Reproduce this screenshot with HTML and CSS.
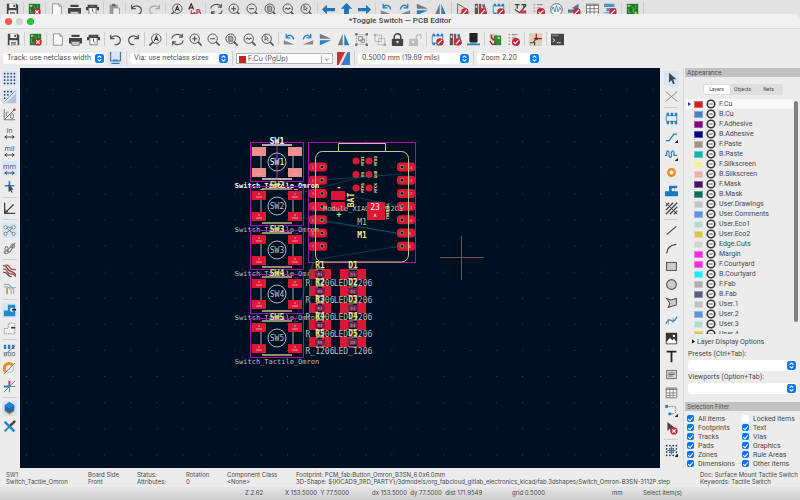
FILE: index.html
```html
<!DOCTYPE html>
<html lang="en">
<head>
<meta charset="utf-8">
<title>Toggle Switch — PCB Editor</title>
<link rel="stylesheet" href="styles.css">
</head>
<body>
<div class="back-toolbar toolbar" data-tools="save | openpcb | page print plot | paste | undo redo:dim | find replace | refresh zoomin zoomout zoomfit zoomobj zoomsel | left up right | rotl rotr mirv mirh | erc lib fpedit | annotate check sim assign table bom | board |"></div>
<main class="window">
  <header class="titlebar">
    <button class="light red" aria-label="Close"></button>
    <button class="light gray" aria-label="Minimize"></button>
    <button class="light green" aria-label="Zoom"></button>
    <h1>*Toggle Switch — PCB Editor</h1>
  </header>
  <div class="toolbar main-toolbar" data-tools="save | openpcb | page print plot | undo redo | find | refresh zoomin zoomout zoomfit zoomobj zoomsel | rotl rotr mirv mirh group ungroup lock unlock:dim | fpedit lib chip | update check | netlist | console"></div>
  <div class="options">
    <span class="pick track"><select aria-label="Track width"><option>Track: use netclass width</option></select><svg class="step" viewBox="0 0 8 8"><use href="#step"/></svg></span>
    <button class="tool on" aria-label="Automatic track width"><svg class="icon"><use href="#trackw"/></svg></button>
    <i class="sep"></i>
    <span class="pick via-size"><select aria-label="Via size"><option>Via: use netclass sizes</option></select><svg class="step" viewBox="0 0 8 8"><use href="#step"/></svg></span>
    <i class="sep"></i>
    <span class="pick layer"><i class="chip-red"></i><select aria-label="Active layer"><option>F.Cu (PgUp)</option></select><svg class="chev" viewBox="0 0 10 10"><path d="M3 4l2 2 2-2"/></svg></span>
    <button class="tool" aria-label="Layer pair"><svg class="icon"><use href="#pair"/></svg></button>
    <i class="sep"></i>
    <span class="pick grid-size"><select aria-label="Grid"><option>0.5000 mm (19.69 mils)</option></select><svg class="step" viewBox="0 0 8 8"><use href="#step"/></svg></span>
    <i class="sep"></i>
    <span class="pick zoom"><select aria-label="Zoom"><option>Zoom 2.20</option></select><svg class="step" viewBox="0 0 8 8"><use href="#step"/></svg></span>
  </div>
  <div class="work">
    <div class="toolbar side left" data-tools="dots:on dotshalf:on polar in mil mm:on cursor | angle | rats:on ratscurve | netcolor netdim | zonefill:on zoneline | padline vialine trackline | layers:on tools"></div>
    <svg class="canvas" id="pcb-canvas" viewBox="20 68 640 400" preserveAspectRatio="xMidYMid slice" role="img" aria-label="Board"></svg>
    <div class="toolbar side right" data-tools="arrow:on cross | footprint route tune via zone hatch | line arc rect circle poly bezier image text textbox tablet dim delete | origin"></div>
    <aside class="panel">
      <h2>Appearance</h2>
      <div class="tabs"><button class="active">Layers</button><button>Objects</button><button>Nets</button></div>
      <div class="layers"><ul id="layer-list"></ul><i class="thumb"></i></div>
      <button class="more"><svg viewBox="0 0 4 6"><path d="M0 0l4 3-4 3z"/></svg>Layer Display Options</button>
      <label for="presets">Presets (Ctrl+Tab):</label>
      <span class="pick wide"><select id="presets"><option></option></select><svg class="step" viewBox="0 0 8 8"><use href="#step"/></svg></span>
      <label for="views">Viewports (Option+Tab):</label>
      <span class="pick wide"><select id="views"><option></option></select><svg class="step" viewBox="0 0 8 8"><use href="#step"/></svg></span>
      <h2 class="filter-title">Selection Filter</h2>
      <div class="filter">
        <label><input type="checkbox" checked>All items</label><label><input type="checkbox">Locked items</label>
        <label><input type="checkbox" checked>Footprints</label><label><input type="checkbox" checked>Text</label>
        <label><input type="checkbox" checked>Tracks</label><label><input type="checkbox" checked>Vias</label>
        <label><input type="checkbox" checked>Pads</label><label><input type="checkbox" checked>Graphics</label>
        <label><input type="checkbox" checked>Zones</label><label><input type="checkbox" checked>Rule Areas</label>
        <label><input type="checkbox" checked>Dimensions</label><label><input type="checkbox" checked>Other items</label>
      </div>
    </aside>
  </div>
  <div class="info">
    <p>SW1<br>Switch_Tactile_Omron</p>
    <p>Board Side<br>Front</p>
    <p>Status:<br>Attributes:</p>
    <p>Rotation<br>0</p>
    <p>Component Class<br>&lt;None&gt;</p>
    <p>Footprint: PCM_fab:Button_Omron_B3SN_6.0x6.0mm<br>3D-Shape: ${KICAD9_3RD_PARTY}/3dmodels/org_fabcloud_gitlab_electronics_kicad/fab.3dshapes/Switch_Omron-B3SN-3112P.step</p>
    <p>Doc: Surface Mount Tactile Switch<br>Keywords: Tactile Switch</p>
  </div>
  <footer class="status"><span></span><span>Z 2.62</span><span>X 153.5000&nbsp; Y 77.5000</span><span>dx 153.5000&nbsp; dy 77.5000&nbsp; dist 171.9549</span><span>grid 0.5000</span><span>mm</span><span>Select item(s)</span></footer>
</main>
<svg class="defs" aria-hidden="true">
  <symbol id="step" viewBox="0 0 8 8"><rect width="8" height="8" rx="2" fill="#0a7aff"/><path d="M2.4 3.2L4 1.7l1.6 1.5M2.4 4.8L4 6.3l1.6-1.5" fill="none" stroke="#fff" stroke-width="1"/></symbol>
  <symbol id="save" viewBox="0 0 16 16"><path d="M1 1h12l2 2v12H1z" fill="#484848"/><path d="M4 1h8v5H4zM3 9h10v6H3z" fill="#f0f0f0"/><path d="M9 2h2v3H9zM5 11h6v1H5zM5 13h6v1H5z" fill="#484848"/></symbol>
  <symbol id="openpcb" viewBox="0 0 16 16"><rect width="14" height="14" x="1" y="1" fill="#187a2c"/><path d="M3 3h3l3 3v3M12 2v4M3 7v5h3" fill="none" stroke="#79bd55"/><circle cx="3.500" cy="3.500" r="1.500" fill="#e5c457"/><circle cx="11" cy="11" r="4.500" fill="#c92736"/><path d="M9 9l4 4m0-4l-4 4" stroke="#fff" stroke-width="1.500"/></symbol>
  <symbol id="board" viewBox="0 0 16 16"><rect width="14" height="14" x="1" y="1" fill="#187a2c"/><path d="M3 3h3l3 3v7M12 2v4l-3 3M3 7v5h3" fill="none" stroke="#79bd55"/><circle cx="3.500" cy="3.500" r="1.500" fill="#e5c457"/><circle cx="12" cy="12" r="1.500" fill="#e5c457"/></symbol>
  <symbol id="page" viewBox="0 0 16 16"><path d="M3 1h8l3 3v11H3z" fill="#f7f7f7" stroke="#888"/><path d="M11 1v3h3" fill="none" stroke="#888"/></symbol>
  <symbol id="print" viewBox="0 0 16 16"><path d="M3 2h10v3H3zM0 6h16v7h-3v-3H3v3H0z" fill="#444"/><path d="M3.500 10.500h9V15h-9z" fill="#f8f8f8" stroke="#444"/><path d="M5 12.500h6" stroke="#888"/></symbol>
  <symbol id="plot" viewBox="0 0 16 16"><path d="M2 2h12v4H2zM0 5h3v4H0zM13 5h3v4h-3z" fill="#444"/><path d="M3.500 6v9M12.500 6v9M3.500 14.500h9M5 4h6" stroke="#777" fill="none"/><path d="M5 7h6v5H5z" fill="#fff"/><path d="M8 7v3l2 2" stroke="#444" fill="none"/></symbol>
  <symbol id="paste" viewBox="0 0 16 16"><path d="M2 2h10v13H2z" fill="#999"/><path d="M5 1h4v3H5z" fill="#666"/><path d="M6 6h8v9H6z" fill="#eee" stroke="#888"/></symbol>
  <symbol id="undo" viewBox="0 0 16 16"><path d="M2 2v5h5M2.500 6.500C5 2 14 3 14 9c0 4-4 6-7 5" fill="none" stroke="#555" stroke-width="1.500"/></symbol>
  <symbol id="redo" viewBox="0 0 16 16"><path d="M14 2v5H9M13.500 6.500C11 2 2 3 2 9c0 4 4 6 7 5" fill="none" stroke="#555" stroke-width="1.500"/></symbol>
  <symbol id="lens" viewBox="0 0 16 16"><circle cx="7" cy="7" r="5.800" fill="none" stroke="#555" stroke-width="1.200"/><path d="M11 11l4.500 4.500" stroke="#555" stroke-width="2"/></symbol>
  <symbol id="find" viewBox="0 0 16 16"><circle cx="9" cy="7" r="5.800" fill="none" stroke="#555" stroke-width="1.200"/><path d="M5 11L.5 15.500" stroke="#555" stroke-width="2"/><path d="M6.500 10L9 4l2.500 6M7.500 8h3" fill="none" stroke="#333" stroke-width="1.400"/></symbol>
  <symbol id="replace" viewBox="0 0 16 16"><path d="M1 8l3-7 3 7M2 6h4" fill="none" stroke="#333" stroke-width="1.500"/><path d="M4 9v4h5m-2-2l2 2-2 2" fill="none" stroke="#c22b3e" stroke-width="1.300"/><path d="M11 8v7h2.500a2 2 0 0 0 0-4H11h2a1.500 1.500 0 0 0 0-3z" fill="none" stroke="#c22b3e" stroke-width="1.300"/></symbol>
  <symbol id="refresh" viewBox="0 0 16 16"><path d="M1 7c1-6 10-7 13-2M15 9c-1 6-10 7-13 2M14 1v4h-4M2 15v-4h4" fill="none" stroke="#555" stroke-width="1.400"/></symbol>
  <symbol id="zoomin" viewBox="0 0 16 16"><use href="#lens"/><path d="M4 7h6M7 4v6" stroke="#444" stroke-width="1.300"/></symbol>
  <symbol id="zoomout" viewBox="0 0 16 16"><use href="#lens"/><path d="M4 7h6" stroke="#444" stroke-width="1.300"/></symbol>
  <symbol id="zoomfit" viewBox="0 0 16 16"><use href="#lens"/><path d="M4.500 4h4l1 1v5h-5z" fill="#aaa" stroke="#555"/></symbol>
  <symbol id="zoomobj" viewBox="0 0 16 16"><use href="#lens"/><path d="M3.500 8l2-2 2 2 2-2 1 1" fill="none" stroke="#555" stroke-width="1.300"/></symbol>
  <symbol id="zoomsel" viewBox="0 0 16 16"><use href="#lens"/><path d="M5 3v6l1.500-1.500L9 10M5 3l4 4H7" fill="none" stroke="#555" stroke-width="1.200"/></symbol>
  <symbol id="left" viewBox="0 0 16 16"><path d="M0 8l6-6v4h10v4H6v4z" fill="#1b74bc"/></symbol>
  <symbol id="right" viewBox="0 0 16 16"><path d="M16 8l-6-6v4H0v4h10v4z" fill="#1b74bc"/></symbol>
  <symbol id="up" viewBox="0 0 16 16"><path d="M8 0l7 7h-4v9H5V7H1z" fill="#1b74bc"/></symbol>
  <symbol id="rotl" viewBox="0 0 16 16"><path d="M1 9l13 5H1z" fill="#888"/><path d="M5 5c2-4 8-2 8 3M4 1v5h5" fill="none" stroke="#2582c8" stroke-width="1.600"/></symbol>
  <symbol id="rotr" viewBox="0 0 16 16"><path d="M15 9L2 14h13z" fill="#888"/><path d="M11 5C9 1 3 3 3 8M12 1v5H7" fill="none" stroke="#2582c8" stroke-width="1.600"/></symbol>
  <symbol id="mirv" viewBox="0 0 16 16"><path d="M1 1l14 6H1z" fill="#777"/><path d="M1 15l14-6H1z" fill="#2582c8"/></symbol>
  <symbol id="mirh" viewBox="0 0 16 16"><path d="M1 15L7 1v14z" fill="#777"/><path d="M15 15L9 1v14z" fill="#2582c8"/></symbol>
  <symbol id="group" viewBox="0 0 16 16"><path d="M2 2h12v12H2z" fill="none" stroke="#999" stroke-dasharray="2 1"/><path d="M4.500 4.500h5v5h-5zM7.500 7.500h4v4h-4z" fill="#eee" stroke="#777"/><path d="M0 0h3v3H0zM13 0h3v3h-3zM0 13h3v3H0zM13 13h3v3h-3z" fill="#777"/></symbol>
  <symbol id="ungroup" viewBox="0 0 16 16"><path d="M2.500 2.500h8v8h-8zM6.500 6.500h8v8h-8z" fill="#eee" stroke="#aaa"/><path d="M1 1h3v3H1zM13 13h3v3h-3z" fill="#aaa"/></symbol>
  <symbol id="lock" viewBox="0 0 16 16"><path d="M4 8V5a4 4 0 0 1 8 0v3" fill="none" stroke="#444" stroke-width="1.800"/><rect x="1" y="7" width="14" height="9" rx="1" fill="#444"/><circle cx="8" cy="11" r="1.500" fill="#ddd"/></symbol>
  <symbol id="unlock" viewBox="0 0 16 16"><path d="M9 8V5a3 3 0 0 1 6 0v2" fill="none" stroke="#777" stroke-width="1.800"/><rect x="0" y="7" width="11" height="9" rx="1" fill="#777"/><circle cx="5" cy="11" r="1.500" fill="#eee"/></symbol>
  <symbol id="no" viewBox="0 0 16 16"><circle cx="11" cy="11" r="4.500" fill="#c92736"/><path d="M8.500 13.500l5-5" stroke="#fff" stroke-width="1.600"/></symbol>
  <symbol id="fpedit" viewBox="0 0 16 16"><path d="M1.500 3.500h13v9h-13z" fill="none" stroke="#2582c8"/><path d="M2 1h3v3H2zM7 1h3v3H7zM12 1h3v3h-3zM2 12h3v3H2zM7 12h3v3H7z" fill="#2582c8"/><use href="#no"/></symbol>
  <symbol id="lib" viewBox="0 0 16 16"><path d="M1 1h4v14H1z" fill="#555"/><path d="M6 1h3v14H6z" fill="#9c4456"/><path d="M10 2l3-1 3 12-3 1z" fill="#557088"/><path d="M2 3h2v3H2z" fill="#ddd"/><use href="#no"/></symbol>
  <symbol id="chip" viewBox="0 0 16 16"><path d="M3 0h10v11H3z" fill="#222"/><path d="M4 11h8v2H4z" fill="#777"/><path d="M0 13h16v2H0z" fill="#2582c8"/></symbol>
  <symbol id="update" viewBox="0 0 16 16"><path d="M1 1h9v9H1z" fill="#d8ceb5"/><path d="M6 3h9v12H6z" fill="#24913b"/><path d="M3 2v4l4 3M1 10l3 4 5-1" fill="none" stroke="#b32331" stroke-width="1.800"/><circle cx="12" cy="6" r="1.500" fill="#e5c457"/></symbol>
  <symbol id="check" viewBox="0 0 16 16"><path d="M2 2h2M6 2h7M2 6h2M6 6h5M2 10h2M2 14h2" stroke="#999" stroke-width="1.500"/><circle cx="11" cy="11" r="5" fill="#c92736"/><path d="M8 11l2 2 4-4" stroke="#fff" stroke-width="1.500" fill="none"/></symbol>
  <symbol id="netlist" viewBox="0 0 16 16"><path d="M0 0h16v16H0z" fill="#ddd0b8"/><path d="M6 7h10M9 1v6" fill="none" stroke="#a32531" stroke-width="1.500"/><path d="M1 12h4l3-4M7 11v4" fill="none" stroke="#444" stroke-width="1.500"/><circle cx="9" cy="7" r="2" fill="#a32531"/></symbol>
  <symbol id="console" viewBox="0 0 16 16"><path d="M0 1h16v14H0z" fill="#444"/><path d="M1 2h8v2H1z" fill="#888"/><path d="M2 7l3 2-3 2M7 12h5" fill="none" stroke="#ddd" stroke-width="1.200"/></symbol>
  <symbol id="erc" viewBox="0 0 16 16"><path d="M2 1l12 7-12 7z" fill="#ddd" stroke="#555"/><use href="#no"/></symbol>
  <symbol id="annotate" viewBox="0 0 16 16"><path d="M1 2h6M4 2v5M9 2h6M12 2v5M1 8l6 4 8-9" stroke="#444" fill="none" stroke-width="1.500"/><path d="M8 9h7v4H8z" fill="#c9404b"/></symbol>
  <symbol id="sim" viewBox="0 0 16 16"><circle cx="8" cy="8" r="7.200" fill="#f7f7f7" stroke="#555"/><path d="M2 9l2-4 2 6 2-8 2 8 2-6 2 4" fill="none" stroke="#2582c8"/></symbol>
  <symbol id="assign" viewBox="0 0 16 16"><path d="M5 6l8-5v9zM0 8h8v4H0z" fill="#56788f"/><use href="#no"/></symbol>
  <symbol id="table" viewBox="0 0 16 16"><path d="M.5 1.500h15v13H.5z" fill="#fff" stroke="#555"/><path d="M1 3h14M1 7h14M1 11h14M5 2v12M10 2v12" stroke="#666"/></symbol>
  <symbol id="bom" viewBox="0 0 16 16"><path d="M0 1h13v4H0zM3 6h12v4H3z" fill="#5891bd"/><path d="M0 12h8" stroke="#777"/><use href="#no"/></symbol>
  <symbol id="trackw" viewBox="0 0 16 16"><path d="M2 0v11h12V0" fill="none" stroke="#555" stroke-width="1.200"/><path d="M5 10h6M3 14h10" stroke="#2582c8" stroke-width="1.800"/></symbol>
  <symbol id="pair" viewBox="0 0 16 16"><path d="M0 0h16v16H0z" fill="#3b7dc0"/><path d="M0 0h11L3 16H0z" fill="#c83434"/><path d="M10 0h3L5 16H2z" fill="#e8e8e8"/></symbol>
  <symbol id="dots" viewBox="0 0 16 16"><path d="M2 2h.1M6 2h.1M10 2h.1M14 2h.1M2 6h.1M6 6h.1M10 6h.1M14 6h.1M2 10h.1M6 10h.1M10 10h.1M14 10h.1M2 14h.1M6 14h.1M10 14h.1M14 14h.1" stroke="#334" stroke-width="2" stroke-linecap="round"/></symbol>
  <symbol id="dotshalf" viewBox="0 0 16 16"><path d="M16 4v12H4z" fill="#b6c4d2"/><path d="M2 2h.1M6 2h.1M10 2h.1M2 6h.1M6 6h.1M2 10h.1" stroke="#334" stroke-width="2" stroke-linecap="round"/><path d="M1 15L15 1" stroke="#888"/></symbol>
  <symbol id="polar" viewBox="0 0 16 16"><path d="M1.500 1v13.500H15M2 14L14 2M4 5v5M5 5h2" fill="none" stroke="#666"/><ellipse cx="11" cy="10" rx="2" ry="3" fill="none" stroke="#666"/><circle cx="14" cy="2" r="1.500" fill="#c92736"/></symbol>
  <symbol id="unitline" viewBox="0 0 14 5"><path d="M2 2.500h10M4 .5l-3 2 3 2M10 .5l3 2-3 2" fill="none" stroke="#444" stroke-width="1.200"/></symbol>
  <symbol id="cursor" viewBox="0 0 16 16"><path d="M8 1v12M2 7h12" stroke="#2582c8" stroke-width="2"/><path d="M7 5v10l2-2 2 3 1-1-2-3h3z" fill="#444"/></symbol>
  <symbol id="angle" viewBox="0 0 16 16"><path d="M2 1v13h13M2 14L13 3" fill="none" stroke="#444" stroke-width="1.600"/><path d="M3 9v4h4z" fill="#444"/></symbol>
  <symbol id="rats" viewBox="0 0 16 16"><path d="M3 4l10 8M3 12l10-8M3 4h10" stroke="#666"/><g fill="#f3f7fb" stroke="#777"><circle cx="3" cy="4" r="2"/><circle cx="13" cy="4" r="2"/><circle cx="3" cy="12" r="2"/><circle cx="13" cy="12" r="2"/></g></symbol>
  <symbol id="ratscurve" viewBox="0 0 16 16"><path d="M2 9C4 3 7 6 6 10s3 5 7-6M1 14L15 1" fill="none" stroke="#777" stroke-width="1.300"/><circle cx="4" cy="12" r="2.500" fill="none" stroke="#777"/><circle cx="12" cy="5" r="2.500" fill="none" stroke="#777"/></symbol>
  <symbol id="netcolor" viewBox="0 0 16 16"><path d="M0 2q4 0 5 3t5 4 6 5M0 10q4 0 6 3t5 3" fill="none" stroke="#555" stroke-width="1.600"/><path d="M3 1q4 0 5 3t8 3M0 6q4 0 5 3t5 3 6 4" fill="none" stroke="#cf4a3d" stroke-width="1.600"/></symbol>
  <symbol id="netdim" viewBox="0 0 16 16"><path d="M1 3h6l6 6v6M1 6h5l4 4v5" fill="none" stroke="#aaa" stroke-width="1.400"/><path d="M5 7v8" stroke="#dd806b" stroke-width="2"/><path d="M7 7h9" stroke="#6aa8d8"/></symbol>
  <symbol id="zonefill" viewBox="0 0 16 16"><path d="M1 8h5V1h9v14H1z" fill="#278bd3"/><circle cx="11" cy="7" r="2.500" fill="#eee"/><path d="M11 7h5" stroke="#223" stroke-width="2"/></symbol>
  <symbol id="zoneline" viewBox="0 0 16 16"><path d="M1.500 8h5V1.500h8v13h-13z" fill="#f2f2f2" stroke="#888" stroke-dasharray="2 1"/><path d="M10 7h5" stroke="#333" stroke-width="2"/></symbol>
  <symbol id="padline" viewBox="0 0 16 16"><path d="M1 1h3v5H1zM6 1h3v5H6zM11 1h3v5h-3z" fill="#2582c8"/><path d="M1.500 10.500h3v4h-3zM6.500 10.500h3v4h-3zM11.500 10.500h3v4h-3zM1 14L15 2" fill="none" stroke="#678"/></symbol>
  <symbol id="vialine" viewBox="0 0 16 16"><circle cx="8" cy="8" r="5" fill="none" stroke="#bbb"/><path d="M3 12A6 6 0 0 1 12 4" fill="none" stroke="#ee9020" stroke-width="4"/><path d="M1 15L15 1" stroke="#777"/></symbol>
  <symbol id="trackline" viewBox="0 0 16 16"><path d="M8 1v7" stroke="#c43b47" stroke-width="2.500"/><path d="M1 8h7" stroke="#2582c8" stroke-width="2.500"/><path d="M8 8v7" stroke="#c43b47"/><path d="M8 8h7" stroke="#2582c8"/><path d="M1 15L15 1" stroke="#777"/></symbol>
  <symbol id="layers" viewBox="0 0 16 16"><path d="M2 9v3l6 4 6-4V9z" fill="#e7a13a"/><path d="M8 0l6 4v6l-6 4-6-4V4z" fill="#196cb1"/><path d="M8 0l6 4-6 4-6-4z" fill="#2582c8"/></symbol>
  <symbol id="tools" viewBox="0 0 16 16"><path d="M2 2l12 12" stroke="#2582c8" stroke-width="3"/><path d="M14 2L2 14" stroke="#2582c8" stroke-width="2.500"/><path d="M15 1L9 7" stroke="#444" stroke-width="3"/></symbol>
  <symbol id="arrow" viewBox="0 0 16 16"><path d="M5 1v12l3-3 2 5 2-1-2-5h4z" fill="#444"/></symbol>
  <symbol id="cross" viewBox="0 0 16 16"><path d="M1 2l14 12M15 2L1 14" stroke="#888" stroke-width="1.200"/></symbol>
  <symbol id="footprint" viewBox="0 0 16 16"><path d="M1.500 4.500h13v7h-13z" fill="#e2edf5" stroke="#2582c8"/><path d="M2 1h3v4H2zM7 1h3v4H7zM12 1h3v4h-3zM2 11h3v4H2zM7 11h3v4H7zM12 11h3v4h-3z" fill="#2582c8"/></symbol>
  <symbol id="route" viewBox="0 0 16 16"><path d="M1 13h4l6-8h4" fill="none" stroke="#2582c8" stroke-width="1.600"/><path d="M16 12v4h-4z" fill="#222"/></symbol>
  <symbol id="tune" viewBox="0 0 16 16"><path d="M0 9h2V5q1.500-3 3 0v5q1.500 3 3 0V5q1.500-3 3 0v4h4" fill="none" stroke="#2582c8" stroke-width="1.400"/><path d="M16 12v4h-4z" fill="#222"/></symbol>
  <symbol id="via" viewBox="0 0 16 16"><circle cx="8" cy="8" r="4" fill="#fff" stroke="#ee8b1b" stroke-width="3"/></symbol>
  <symbol id="zone" viewBox="0 0 16 16"><path d="M0 9h5V2h10v3h-3v4h4v6H0z" fill="#1b79bf"/><circle cx="10" cy="7" r="2" fill="#eee"/></symbol>
  <symbol id="hatch" viewBox="0 0 16 16"><path d="M1 5l4-4M1 10l9-9M1 15L15 1M6 15l9-9M11 15l4-4" stroke="#444" stroke-width="1.600"/><path d="M1 1l14 14" stroke="#444"/></symbol>
  <symbol id="line" viewBox="0 0 16 16"><path d="M2 13L14 3" stroke="#444" stroke-width="1.400"/></symbol>
  <symbol id="arc" viewBox="0 0 16 16"><path d="M2 14Q3 4 14 3" fill="none" stroke="#444" stroke-width="1.400"/></symbol>
  <symbol id="rect" viewBox="0 0 16 16"><path d="M2 3h12v10H2z" fill="#ccc" stroke="#555" stroke-width="1.300"/></symbol>
  <symbol id="circle" viewBox="0 0 16 16"><circle cx="8" cy="8" r="6" fill="#ccc" stroke="#555" stroke-width="1.300"/></symbol>
  <symbol id="poly" viewBox="0 0 16 16"><path d="M2 3l5 2 7-2v8l-10 3 2-5z" fill="#ccc" stroke="#555" stroke-width="1.300"/></symbol>
  <symbol id="bezier" viewBox="0 0 16 16"><path d="M1 12Q5 5 8 8t7-5" fill="none" stroke="#2582c8" stroke-width="1.500"/><path d="M4 6v7M10 5v6" stroke="#888"/></symbol>
  <symbol id="image" viewBox="0 0 16 16"><rect x="1" y="1" width="14" height="14" rx="1" fill="#333"/><path d="M2 12l4-5 3 3 2-2 3 4v2H2z" fill="#fff"/><circle cx="11" cy="5" r="1.500" fill="#fff"/></symbol>
  <symbol id="text" viewBox="0 0 16 16"><path d="M2 2h12M8 2v13" fill="none" stroke="#222" stroke-width="2.200"/></symbol>
  <symbol id="textbox" viewBox="0 0 16 16"><path d="M2 3h12v10H2z" fill="#ddd" stroke="#555"/><path d="M4 6h8M4 8h8M4 10h6" stroke="#555"/></symbol>
  <symbol id="tablet" viewBox="0 0 16 16"><path d="M1.500 2.500h13v12h-13z" fill="#fff" stroke="#666"/><path d="M1 3h14v2H1z" fill="#888"/><path d="M2 8.500h12M2 11.500h12M6 3v11M10 3v11" stroke="#777"/></symbol>
  <symbol id="dim" viewBox="0 0 16 16"><path d="M2 3h11v8M6 12h6" fill="none" stroke="#777" stroke-dasharray="2 1"/><circle cx="2" cy="3" r="2" fill="#2582c8"/><circle cx="6" cy="12" r="2" fill="#2582c8"/><path d="M16 12v4h-4z" fill="#222"/></symbol>
  <symbol id="delete" viewBox="0 0 16 16"><path d="M3 0v11l3-3 2 4 2-1-2-4h4z" fill="#444"/><circle cx="11" cy="11" r="4.500" fill="#c92736"/><path d="M9 9l4 4m0-4l-4 4" stroke="#fff" stroke-width="1.500"/></symbol>
  <symbol id="origin" viewBox="0 0 16 16"><use href="#dots"/><path d="M8 3v10M3 8h10" stroke="#2582c8" stroke-width="1.500"/><path d="M16 12v4h-4z" fill="#222"/></symbol>
  <symbol id="eye" viewBox="0 0 10 10"><circle cx="5" cy="5" r="3.800" fill="#fafafa" stroke="#333" stroke-width="1.600"/><path d="M2.500 5h5" stroke="#777" stroke-width=".8"/><circle cx="5" cy="5" r="1" fill="#999"/></symbol>
</svg>
<script src="app.js"></script>
</body>
</html>
```
FILE: styles.css
```css
* { box-sizing: border-box; }
html, body { height: 100%; }
body {
  margin: 0;
  display: flex;
  flex-direction: column;
  overflow: hidden;
  background: #e2e2e2;
  color: #4a4a4a;
  font: 7px/10px Inter, "Liberation Sans", sans-serif;
}
button, select, input { font: inherit; color: inherit; margin: 0; padding: 0; border: 0; background: none; }
h1, h2, p, ul { margin: 0; padding: 0; font: inherit; }
.defs { position: absolute; width: 0; height: 0; }

.toolbar { display: flex; align-items: center; gap: 3px; }
.tool { flex: none; display: grid; place-items: center; width: 15px; height: 15px; border-radius: 2px; }
.tool.on { background: #d5e6fa; }
.tool.dim { opacity: .4; }
.icon { display: block; width: 13px; height: 13px; }
.unit { align-content: center; font: 7px/8px "Open Sans", sans-serif; }
.unit svg { width: 13px; height: 4px; }
.sep { flex: none; width: 1px; height: 14px; background: #d0d0d0; }
.back-toolbar { flex: none; height: 14px; padding: 2px 5px 0; align-items: flex-start; overflow: hidden; }

.window {
  flex: 1;
  min-height: 0;
  display: flex;
  flex-direction: column;
  background: #ececec;
  border-radius: 6px 6px 0 0;
  overflow: hidden;
}
.titlebar { flex: none; display: flex; align-items: center; gap: 4px; height: 15px; padding: 0 5px; background: #f2f1f2; border-bottom: 1px solid #dcdcdc; }
.titlebar h1 { flex: 1; margin-right: 33px; text-align: center; font: 500 8px/10px Roboto, sans-serif; color: #444; }
.light { width: 7px; height: 7px; border-radius: 50%; }
.light.red { background: #fb5650; }
.light.gray { background: #d3d2d4; }
.light.green { background: #27c138; }
.main-toolbar { flex: none; height: 20px; padding: 0 6px; }

.options { flex: none; display: flex; align-items: center; gap: 3px; height: 19px; padding: 0 3px 1px; }
.pick { display: grid; align-items: center; height: 11px; background: #fff; border-radius: 3px; }
.pick select { grid-area: 1 / 1; width: 100%; height: 11px; padding-left: 4px; appearance: none; outline: 0; }
.step { grid-area: 1 / 1; justify-self: end; width: 9px; height: 9px; margin-right: 1px; pointer-events: none; }
.track { width: 102px; }
.via-size { width: 99px; }
.layer { width: 97px; border: 1px solid #b5b5b5; border-radius: 0; }
.layer select { padding-left: 11px; }
.chip-red { grid-area: 1 / 1; width: 7px; height: 7px; margin-left: 2px; background: #c92020; }
.chev { grid-area: 1 / 1; justify-self: end; width: 11px; height: 9px; border-left: 1px solid #b5b5b5; fill: none; stroke: #555; pointer-events: none; }
.grid-size { width: 112px; }
.zoom { width: 63px; }

.work { flex: 1; min-height: 0; display: flex; }
.side { flex: none; flex-direction: column; padding-top: 3px; overflow: hidden; }
.side .sep { width: 14px; height: 1px; }
.left { width: 20px; padding-right: 1px; }
.right { width: 23px; padding-right: 1px; }
.canvas { flex: 1; min-width: 0; display: block; height: 100%; background: #001023; }

.panel { flex: none; width: 117px; display: flex; flex-direction: column; padding-left: 1px; border-left: 1px solid #dadada; font-family: Roboto, sans-serif; }
.panel h2 { flex: none; height: 9px; padding-left: 2px; font: 6px/9px Inter, sans-serif; background: #c2c2c2; }
.tabs { flex: none; align-self: center; display: flex; margin: 7px 0 4px; padding: 1px; border-radius: 3px; background: #dedede; font-size: 5px; line-height: 9px; }
.tabs button { width: 26px; border-radius: 2px; }
.tabs .active { background: #fff; }
.layers { flex: 1; min-height: 0; display: flex; gap: 1px; margin: 0 2px 0 1px; overflow: hidden; }
.layers ul { flex: 1; list-style: none; }
.layers li { display: flex; align-items: center; gap: 3px; height: 10px; padding-left: 2px; }
.layers li::before { content: ""; width: 3px; }
.layers li:first-child { background: #fafafa; }
.layers li:first-child::before { border: solid transparent; border-width: 2px 0 2px 3px; border-left-color: #1536e8; width: 0; }
.swatch { width: 9px; height: 7px; border: 1px solid #ffffff55; }
.eye { width: 10px; height: 10px; }
.thumb { flex: none; width: 4px; height: 94%; margin-top: 2px; border-radius: 2px; background: #7f7f7f; }
.more { flex: none; display: flex; align-items: center; gap: 2px; height: 15px; padding-left: 7px; }
.more svg { width: 3px; height: 5px; fill: #222; }
.panel > label { flex: none; height: 11px; padding-left: 3px; }
.wide { flex: none; margin: 0 3px 1px 3px; }
.panel .filter-title { margin-top: 7px; }
.filter { flex: none; display: grid; grid-template-columns: 55px 1fr; padding: 3px 0 0 2px; }
.filter label { display: flex; align-items: center; gap: 4px; height: 9px; white-space: nowrap; }
.filter input { appearance: none; display: grid; width: 7px; height: 7px; border-radius: 2px; background: #fff; }
.filter input:checked { background: #0a72f5; }
.filter input:checked::after { content: ""; place-self: center; width: 2px; height: 4px; border: solid #fff; border-width: 0 1px 1px 0; rotate: 40deg; }

.info { flex: none; display: grid; grid-template-columns: 82px 49px 49px 41px 69px 404px 1fr; height: 19px; padding: 3px 0 0 6px; font-size: 6px; line-height: 7px; white-space: nowrap; overflow: hidden; }
.status { flex: none; display: grid; grid-template-columns: 245px 40px 87px 140px 100px 31px 1fr; height: 13px; font-size: 6px; line-height: 11px; white-space: nowrap; background: linear-gradient(#e6e6e6, #cecece); }

.mono { font: 7px "DejaVu Sans Mono", monospace; text-anchor: middle; fill: #bdbdbd; }
.ref { font-size: 8px; }
.bold { font-weight: bold; }
.silk { fill: #eee48a; }
.white { fill: #fff; }
.tiny { font-size: 4px; }
.mid { font-size: 6px; }
.pad-label { fill: #ff9aa4; }
```
FILE: app.js
```js
const units = ['in', 'mil', 'mm'];
document.querySelectorAll('[data-tools]').forEach(bar => {
  bar.innerHTML = bar.dataset.tools.split(' ').map(t => {
    if (t === '|') return '<i class="sep"></i>';
    const [id, state = ''] = t.split(':');
    if (units.includes(id)) return `<button class="tool unit ${state}">${id}<svg><use href="#unitline"/></svg></button>`;
    return `<button class="tool ${state}" aria-label="${id}"><svg class="icon"><use href="#${id}"/></svg></button>`;
  }).join('');
});

const layers = [
  ['F.Cu', '#d01f1f'], ['B.Cu', '#4d7fc4'], ['F.Adhesive', '#840084'], ['B.Adhesive', '#000084'],
  ['F.Paste', '#a49488'], ['B.Paste', '#10b4ac'], ['F.Silkscreen', '#f2eda1'], ['B.Silkscreen', '#e8b2a7'],
  ['F.Mask', '#4b1363'], ['B.Mask', '#106b5c'], ['User.Drawings', '#c2c2c2'], ['User.Comments', '#5994dc'],
  ['User.Eco1', '#b4dbd2'], ['User.Eco2', '#d8c852'], ['Edge.Cuts', '#d0d2cd'], ['Margin', '#ff26e2'],
  ['F.Courtyard', '#ff26e2'], ['B.Courtyard', '#26e9ff'], ['F.Fab', '#afafaf'], ['B.Fab', '#585d84'],
  ['User.1', '#c2c2c2'], ['User.2', '#5994dc'], ['User.3', '#b4dbd2'], ['User.4', '#d8c852']
];
document.getElementById('layer-list').innerHTML = layers.map(([name, color]) =>
  `<li><i class="swatch" style="background:${color}"></i><svg class="eye"><use href="#eye"/></svg>${name}</li>`).join('');

const text = (x, y, s, cls = '', turn = 0) =>
  `<text class="mono ${cls}" x="${x}" y="${y}"${turn ? ` transform="rotate(${turn} ${x} ${y})"` : ''}>${s}</text>`;
const box = (x, y, w, h, fill, more = '') => `<rect x="${x}" y="${y}" width="${w}" height="${h}" fill="${fill}" ${more}/>`;
const red = '#dc1735';
const outline = color => `stroke="${color}" stroke-width="1"`;

function button(n) {
  const y = 162 + (n - 1) * 44;
  const hot = n === 1;
  const pad = hot ? '#ef8d8d' : red;
  const line = hot ? '#e4e4e4' : '#bdb887';
  let s = box(250.5, y - 19.5, 53, 39, 'none', outline('#a411a4'));
  s += `<path d="M261 ${y - 15}v30M293 ${y - 15}v30" ${outline('#a9a9a9')}/>`;
  s += `<path d="M262 ${y - 17}h30M262 ${y + 17}h30" stroke="${line}" stroke-width="1.300"/>`;
  for (const px of [252, 288]) for (const py of [y - 15, y + 6]) {
    s += box(px, py, 14, 9, pad) + `<path d="M${px + 4} ${py + 6}h6M${px + 7} ${py + 2}v2" stroke="#ff9aa4"/>`;
  }
  s += `<circle cx="277" cy="${y}" r="9" fill="none" ${outline('#b8b8b8')}/>`;
  s += text(277, y + 3, 'SW' + n, hot ? 'ref white' : 'ref');
  if (hot) s += `<path d="M277 ${y - 18}v36" stroke="#d957d9" stroke-width=".7"/>`;
  s += text(277, hot ? 144 : y - 18, 'SW' + n, 'ref bold ' + (hot ? 'white' : 'silk'));
  s += text(277, y + 26, 'Switch_Tactile_Omron', hot ? 'white bold' : '');
  return s;
}

function part(x, ref, n, label) {
  const y = 274 + (n - 1) * 17;
  const half = ref === 'R' ? 11 : 13;
  return box(x - half, y - 5, 9, 10, red) + box(x + half - 9, y - 5, 9, 10, red) +
    box(x - 5, y - 3, 10, 6, '#712350') +
    `<path d="M${x - 4} ${y - 5}h8M${x - 4} ${y + 5}h8" ${outline('#c7bd7a')}/>` +
    text(x, y + 2, ref + n, 'tiny') +
    text(x, y - 6, ref + n, 'ref bold silk') +
    text(x, y + 12, label, 'ref');
}

function moduleBoard() {
  let s = box(308.5, 142.5, 107, 120, 'none', outline('#a411a4'));
  for (let i = 0; i < 7; i++) {
    const y = 167 + i * 13.2;
    s += box(309, y - 4.5, 18, 9, red, 'rx="3"') + box(397, y - 4.5, 18, 9, red, 'rx="3"');
    s += text(313, y + 2, i + 1, 'tiny') + text(410, y + 2, 14 - i, 'tiny');
    for (const x of [322, 402]) s += `<circle cx="${x}" cy="${y}" r="1.800" fill="#081020" stroke="#cdb86b" stroke-width=".6"/>`;
  }
  s += box(315.5, 151.5, 93, 110.500, 'none', 'rx="7" ' + outline('#c9c58c'));
  s += `<path d="M338.500 151v-7.500h47v7.500" fill="none" ${outline('#c9c58c')}/>`;
  [['MTDI', 'MTDO'], ['EN', 'GND'], ['MTMS', 'MTCK']].forEach((names, r) => names.forEach((name, c) => {
    const x = 356 + c * 13, y = 161 + r * 13.5;
    s += `<circle cx="${x}" cy="${y}" r="3.500" fill="${red}"/>` + text(x + 8, y, name, 'tiny bold silk', -90);
  }));
  s += box(331, 191, 14, 9, red, 'rx="1"') + box(331, 202, 14, 9, red, 'rx="1"');
  s += text(363, 211, 'Module_XIAO-ESP32C3');
  s += box(367, 202, 18, 18, red);
  s += text(354, 200, 'BAT', 'ref bold silk', -90) + text(389, 211, 'THERMAL', 'tiny bold silk', -90);
  s += text(339, 190, '-', 'ref bold silk') + text(339, 217, '+', 'ref bold silk');
  s += text(375, 210, '23', 'ref white') + text(375, 217, 'x', 'mid white');
  s += text(362, 225, 'M1', 'ref') + text(362, 238, 'M1', 'ref bold silk');
  return s;
}

let art = '<defs><pattern id="grid-dots" x="26" y="89" width="26.100" height="26.100" patternUnits="userSpaceOnUse"><path d="M0 .5h1" stroke="#384554"/></pattern></defs>';
art += box(20, 68, 640, 400, 'url(#grid-dots)');
art += moduleBoard();
for (let n = 1; n <= 5; n++) art += button(n);
for (let n = 1; n <= 5; n++) art += part(320, 'R', n, 'R_1206') + part(353, 'D', n, 'LED_1206');
art += '<path d="M292 195L369 175M322 180l80-6M345 195l57 12M292 216l110 18M313 260l89-14M313 262l-20 66M313 262l-6 80M313 262v-56M322 220l80 14" fill="none" stroke="#17807f" stroke-width=".4"/>';
art += '<path d="M440 257.500h44M461.500 236v44" stroke="#6b5058"/>';
document.getElementById('pcb-canvas').innerHTML = art;
```
